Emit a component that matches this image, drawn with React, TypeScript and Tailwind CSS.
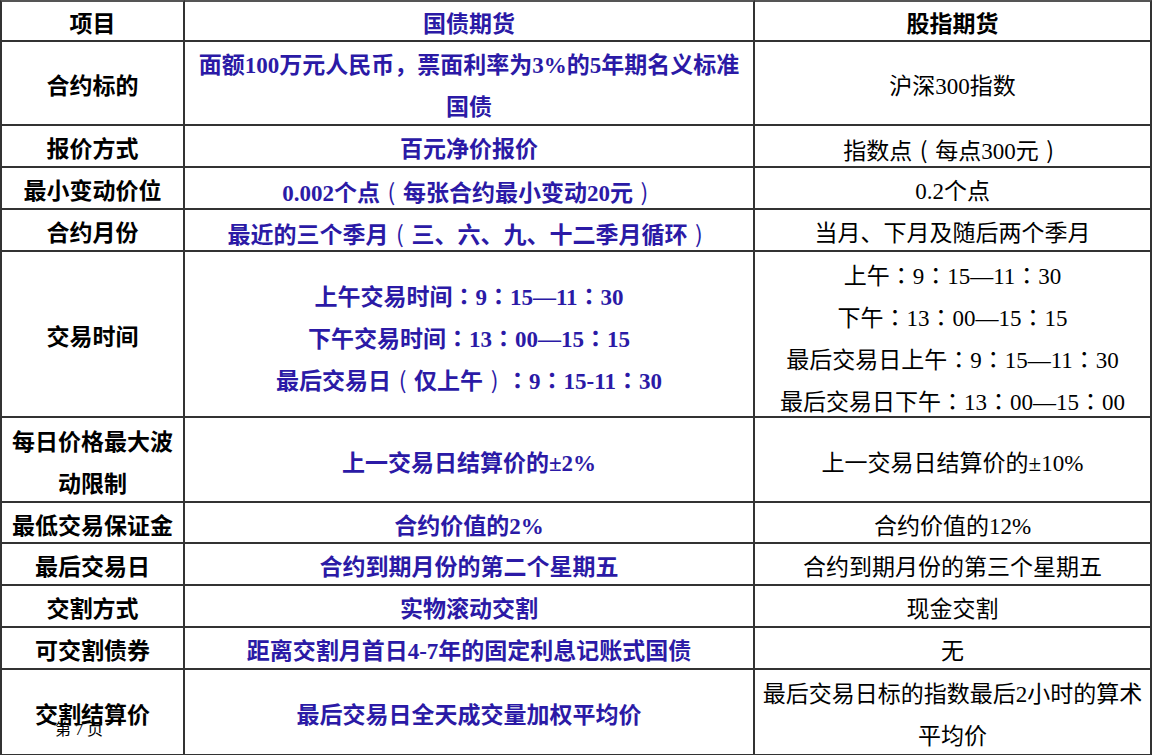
import React from 'react';

type Row = {
  label: string[];
  bond: string[];
  index: string[];
};

const header = { label: '项目', bond: '国债期货', index: '股指期货' };

const rows: Row[] = [
  {
    label: ['合约标的'],
    bond: ['面额100万元人民币，票面利率为3%的5年期名义标准', '国债'],
    index: ['沪深300指数'],
  },
  { label: ['报价方式'], bond: ['百元净价报价'], index: ['指数点（每点300元）'] },
  { label: ['最小变动价位'], bond: ['0.002个点（每张合约最小变动20元）'], index: ['0.2个点'] },
  { label: ['合约月份'], bond: ['最近的三个季月（三、六、九、十二季月循环）'], index: ['当月、下月及随后两个季月'] },
  {
    label: ['交易时间'],
    bond: ['上午交易时间：9：15—11：30', '下午交易时间：13：00—15：15', '最后交易日（仅上午）：9：15-11：30'],
    index: ['上午：9：15—11：30', '下午：13：00—15：15', '最后交易日上午：9：15—11：30', '最后交易日下午：13：00—15：00'],
  },
  {
    label: ['每日价格最大波', '动限制'],
    bond: ['上一交易日结算价的±2%'],
    index: ['上一交易日结算价的±10%'],
  },
  { label: ['最低交易保证金'], bond: ['合约价值的2%'], index: ['合约价值的12%'] },
  { label: ['最后交易日'], bond: ['合约到期月份的第二个星期五'], index: ['合约到期月份的第三个星期五'] },
  { label: ['交割方式'], bond: ['实物滚动交割'], index: ['现金交割'] },
  { label: ['可交割债券'], bond: ['距离交割月首日4-7年的固定利息记账式国债'], index: ['无'] },
  {
    label: ['交割结算价'],
    bond: ['最后交易日全天成交量加权平均价'],
    index: ['最后交易日标的指数最后2小时的算术', '平均价'],
  },
];

// full-width colon and brackets sit centred in their em box, like the slide
function fmt(s: string) {
  return s.split(/([：（）])/).map((part, i) => {
    if (part === '：')
      return (
        <span key={i} className="font-['Noto_Sans_CJK_TC',sans-serif]">
          ：
        </span>
      );
    if (part === '（' || part === '）')
      return (
        <span key={i} className="inline-block w-[1em] text-center font-['Noto_Sans_CJK_SC',sans-serif] font-normal">
          {part === '（' ? '(' : ')'}
        </span>
      );
    return <React.Fragment key={i}>{part}</React.Fragment>;
  });
}

function Cell({
  lines,
  first,
  top,
  blue,
  bold,
  children,
}: {
  lines: string[];
  first?: boolean;
  top?: boolean;
  blue?: boolean;
  bold?: boolean;
  children?: React.ReactNode;
}) {
  return (
    <div
      className={`relative flex flex-col items-center justify-center pt-[8px] border-r-2 border-b-2 border-[#333] whitespace-nowrap text-center leading-[42px] ${
        first ? 'border-l-2' : ''
      } ${top ? 'border-t-2 border-t-[#555]' : ''} ${blue ? 'text-[#2b1aa6]' : ''} ${bold ? 'font-bold' : ''}`}
    >
      {lines.map((l, i) => (
        <div key={i} className="shrink-0 h-[42px] flex items-center">
          <span>{fmt(l)}</span>
        </div>
      ))}
      {children}
    </div>
  );
}

export default function App() {
  return (
    <div className="w-[1152px] h-[755px] overflow-hidden bg-white font-['Liberation_Serif','Noto_Sans_CJK_SC',serif] text-[23px] text-black">
      <div className="grid grid-cols-[185px_570px_397px] grid-rows-[42px_84px_42px_42px_42px_166px_85px_41px_42px_42px_42px_86px]">
        <Cell lines={[header.label]} first top bold />
        <Cell lines={[header.bond]} top bold blue />
        <Cell lines={[header.index]} top bold />
        {rows.map((r, i) => (
          <React.Fragment key={i}>
            <Cell lines={r.label} first bold>
              {i === rows.length - 1 && (
                <span className="absolute left-[53px] top-[51px] text-[16px] leading-[18px] font-normal">第 7 页</span>
              )}
            </Cell>
            <Cell lines={r.bond} bold blue />
            <Cell lines={r.index} />
          </React.Fragment>
        ))}
      </div>
    </div>
  );
}
